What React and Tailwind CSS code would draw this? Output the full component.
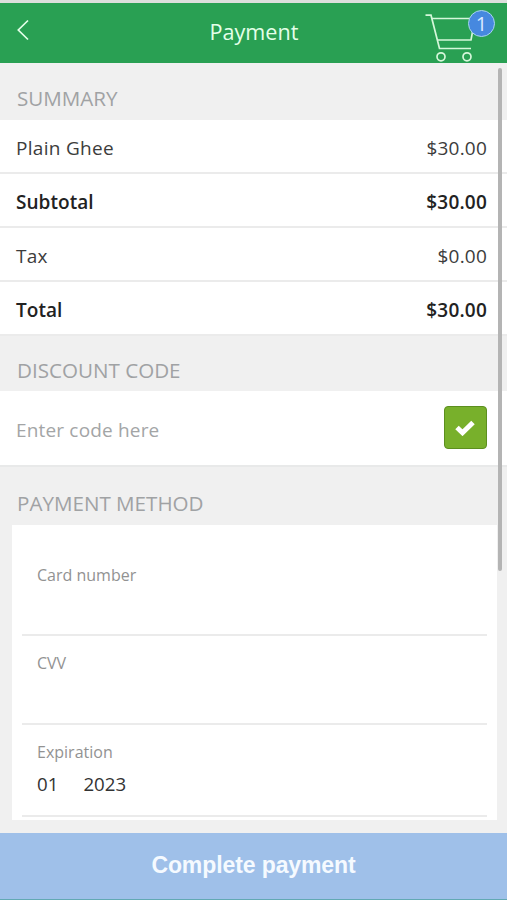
import React, { useState } from 'react';

const summaryRows = [
  { label: 'Plain Ghee', amount: '$30.00', bold: false },
  { label: 'Subtotal', amount: '$30.00', bold: true },
  { label: 'Tax', amount: '$0.00', bold: false },
  { label: 'Total', amount: '$30.00', bold: true },
];

function CartIcon() {
  return (
    <svg className="h-[50px] w-[60px]" viewBox="0 0 60 50" fill="none" stroke="#d5f7da" strokeWidth="1.7">
      <path d="M0.5 3.2H6L14.5 36.5H46" />
      <path d="M6.8 6.5H50L46 28H12.5" />
      <circle cx="16" cy="44.8" r="4" />
      <circle cx="42" cy="44.8" r="4" />
    </svg>
  );
}

function SectionTitle({ className, children }) {
  return (
    <h2 className={`px-[17px] text-[20.6px] leading-[28px] text-[#a0a2a4] ${className}`}>
      {children}
    </h2>
  );
}

export default function App() {
  const [code, setCode] = useState('');

  return (
    <div className="relative flex h-[900px] w-[507px] flex-col overflow-hidden bg-[#f0f0f0] font-['Open_Sans','Noto_Sans',sans-serif]">
      <header className="relative flex h-[63px] shrink-0 items-center justify-center border-t-[3px] border-[#dcdfdc] bg-[#29a053]">
        <button className="absolute left-[16px] top-[15px]" aria-label="Back">
          <svg className="h-[24px] w-[14px]" viewBox="0 0 14 24" fill="none" stroke="#e4ffe9" strokeWidth="1.7">
            <path d="M12 2.5L2.3 12L12 21.5" />
          </svg>
        </button>
        <h1 className="pb-[3px] pl-[1px] text-[21.6px] leading-[30px] text-[#e4ffe9]">Payment</h1>
        <div className="absolute left-[425px] top-[9px]">
          <CartIcon />
        </div>
        <span className="absolute left-[468px] top-[7px] flex h-[27px] w-[27px] items-center justify-center rounded-full border border-[#a9d5ee] bg-[#4688df] text-[20px] leading-none text-[#d9eaff]">
          1
        </span>
      </header>

      {/* Order summary */}
      <SectionTitle className="h-[57px] shrink-0 pt-[21px]">SUMMARY</SectionTitle>
      <ul className="shrink-0 bg-white">
        {summaryRows.map((row) => (
          <li
            key={row.label}
            className={`flex h-[54px] items-center justify-between border-b-2 border-[#ebebeb] pl-[16px] pr-[20px] pt-[5px] text-[19px] ${
              row.bold ? 'font-semibold text-[#222]' : 'text-[#3c3c3c]'
            }`}
          >
            <span className={row.bold ? 'tracking-[0.05px]' : 'tracking-[0.3px]'}>{row.label}</span>
            <span className="tracking-[0.2px]">{row.amount}</span>
          </li>
        ))}
      </ul>

      {/* Discount */}
      <SectionTitle className="h-[55px] shrink-0 pt-[20px]">DISCOUNT CODE</SectionTitle>
      <div className="flex h-[76px] shrink-0 items-center justify-between border-b-2 border-[#e8e9e9] bg-white pl-[16px] pr-[20px]">
        <input
          className="w-[300px] pt-[5px] text-[19px] tracking-[0.17px] text-[#333] outline-none placeholder:text-[#a3a5a6]"
          placeholder="Enter code here"
          value={code}
          onChange={(e) => setCode(e.target.value)}
        />
        <button className="mb-[2px] flex h-[43px] w-[43px] items-center justify-center rounded-[4px] border border-[#5c8f1f] bg-[#78b02b] pr-[1px] pt-[2px]" aria-label="Apply code">
          <svg className="h-[16px] w-[20px]" viewBox="0 0 20 16" fill="none" stroke="#fff" strokeWidth="5">
            <path d="M2 7.5L7.5 12.7L18 2.5" />
          </svg>
        </button>
      </div>

      {/* Payment method */}
      <SectionTitle className="h-[58px] shrink-0 pt-[22px]">PAYMENT METHOD</SectionTitle>
      <div className="ml-[12px] flex h-[295px] w-[485px] shrink-0 flex-col bg-white px-[10px] text-[16px] text-[#929292]">
        <div className="h-[111px] border-b-2 border-[#ebebeb] pl-[15px] pt-[38px]">Card number</div>
        <div className="h-[89px] border-b-2 border-[#ebebeb] pl-[15px] pt-[15px]">CVV</div>
        <div className="h-[92px] border-b-2 border-[#ebebeb] pl-[15px] pt-[15px]">
          <div>Expiration</div>
          <div className="flex gap-[25px] pt-[6px] text-[18.7px] leading-[28px] text-[#333]">
            <span>01</span>
            <span>2023</span>
          </div>
        </div>
      </div>

      <button className="mt-auto h-[67px] shrink-0 border-b border-[#62a9b3] bg-[#9fc0e9] pb-[1px] font-['Liberation_Sans',sans-serif] text-[23px] font-bold tracking-[-0.1px] text-[#f5faff]">
        Complete payment
      </button>

      <div className="absolute left-[498px] top-[68px] h-[503px] w-[4px] rounded-full bg-[#b4b4b4]" />
    </div>
  );
}
